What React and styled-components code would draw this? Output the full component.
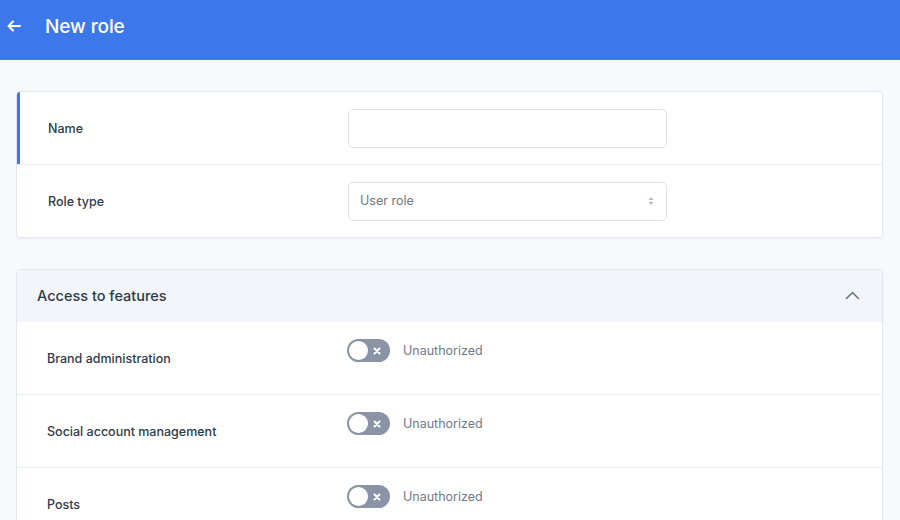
import React from "react";
import styled, { createGlobalStyle } from "styled-components";

const Global = createGlobalStyle`
  html, body { margin: 0; padding: 0; }
  body {
    background: #f7fafd;
    font-family: Inter, "Noto Sans", "Liberation Sans", sans-serif;
    -webkit-font-smoothing: antialiased;
  }
  * { box-sizing: border-box; }
`;

const Page = styled.div`
  width: 900px;
  height: 520px;
  overflow: hidden;
  background: #f7fafd;
`;

const TopBar = styled.header`
  height: 60px;
  background: #3d78ea;
  display: flex;
  align-items: center;
  padding: 0 0 8px 6px;
  gap: 24px;
  color: #fff;
`;

const BackButton = styled.button`
  width: 15px;
  height: 15px;
  padding: 0;
  border: 0;
  background: none;
  color: #fff;
  display: flex;
  align-items: center;
  justify-content: center;
`;

const Title = styled.h1`
  margin: 0;
  font-size: 19px;
  font-weight: 500;
  letter-spacing: -0.1px;
`;

const Content = styled.main`
  padding: 31px 17px 0 16px;
  display: flex;
  flex-direction: column;
  gap: 31px;
`;

const Card = styled.section`
  background: #fff;
  border: 1px solid #e3e7ec;
  border-radius: 4px;
  box-shadow: 0 2px 3px rgba(40, 60, 90, 0.04);
  overflow: hidden;
`;

const FieldRow = styled.div`
  position: relative;
  display: flex;
  align-items: center;
  height: ${(p) => (p.$first ? 72 : 73)}px;
  padding-left: 31px;
  border-top: ${(p) => (p.$first ? "0" : "1px solid #eceff3")};

  &::before {
    content: "";
    display: ${(p) => (p.$active ? "block" : "none")};
    position: absolute;
    left: 0;
    top: 0;
    bottom: 0;
    width: 3px;
    background: #3d78ea;
  }
`;

const Label = styled.div`
  width: 300px;
  flex: none;
  font-size: 12.5px;
  font-weight: 500;
  color: #2e3a4b;
`;

const TextInput = styled.input`
  width: 319px;
  height: 39px;
  border: 1px solid #dfe3e9;
  border-radius: 5px;
  background: #fff;
  padding: 0 11px;
  font: inherit;
  outline: none;
`;

const SelectBox = styled.div`
  width: 319px;
  height: 39px;
  border: 1px solid #dfe3e9;
  border-radius: 5px;
  background: #fff;
  padding: 0 12px 1px 11px;
  display: flex;
  align-items: center;
  justify-content: space-between;
  font-size: 12.5px;
  color: #6c7686;
`;

const SectionHead = styled.div`
  height: 52px;
  background: #f2f6fb;
  display: flex;
  align-items: center;
  justify-content: space-between;
  padding: 0 22px 1px 20px;
  font-size: 14.5px;
  font-weight: 500;
  color: #2e3a4b;
`;

const FeatureRow = styled.div`
  display: flex;
  height: ${(p) => (p.$first ? 72 : 73)}px;
  padding-left: 30px;
  border-top: ${(p) => (p.$first ? "0" : "1px solid #eceff3")};
`;

const FeatureLabel = styled(Label)`
  align-self: center;
`;

const Permission = styled.div`
  display: flex;
  align-items: center;
  gap: 13px;
  margin-top: 17px;
  height: 23px;
  font-size: 12.5px;
  color: #6f7a8a;
`;

const Toggle = styled.span`
  width: 43px;
  height: 23px;
  border-radius: 12px;
  background: #8b93a6;
  display: flex;
  align-items: center;
  justify-content: space-between;
  padding: 0 9px 0 2px;
  flex: none;
`;

const Knob = styled.span`
  width: 19px;
  height: 19px;
  border-radius: 50%;
  background: #fff;
`;

const features = ["Brand administration", "Social account management", "Posts"];

export default function App() {
  return (
    <Page>
      <Global />
      <TopBar>
        <BackButton aria-label="Back">
          <svg width="14" height="12" viewBox="0 0 14 12" fill="none" stroke="currentColor" strokeWidth="2" strokeLinecap="round" strokeLinejoin="round">
            <path d="M13 6H2M6 1.5L1.5 6 6 10.5" />
          </svg>
        </BackButton>
        <Title>New role</Title>
      </TopBar>
      <Content>
        <Card>
          <FieldRow $first $active>
            <Label>Name</Label>
            <TextInput />
          </FieldRow>
          <FieldRow>
            <Label>Role type</Label>
            <SelectBox>
              <span>User role</span>
              <svg width="6" height="10" viewBox="0 0 6 10" fill="#b3bac5">
                <path d="M3 1L5.5 4H0.5z" />
                <path d="M3 9L5.5 6H0.5z" />
              </svg>
            </SelectBox>
          </FieldRow>
        </Card>
        <Card>
          <SectionHead>
            <span>Access to features</span>
            <svg width="15" height="9" viewBox="0 0 15 9" fill="none" stroke="#6b7482" strokeWidth="1.6" strokeLinecap="round" strokeLinejoin="round">
              <path d="M1.5 7.5L7.5 1.5l6 6" />
            </svg>
          </SectionHead>
          {features.map((f, i) => (
            <FeatureRow key={f} $first={i === 0}>
              <FeatureLabel>{f}</FeatureLabel>
              <Permission>
                <Toggle>
                  <Knob />
                  <svg width="8" height="8" viewBox="0 0 8 8" stroke="#fff" strokeWidth="2" strokeLinecap="round">
                    <path d="M1.5 1.5l5 5M6.5 1.5l-5 5" />
                  </svg>
                </Toggle>
                <span>Unauthorized</span>
              </Permission>
            </FeatureRow>
          ))}
        </Card>
      </Content>
    </Page>
  );
}
